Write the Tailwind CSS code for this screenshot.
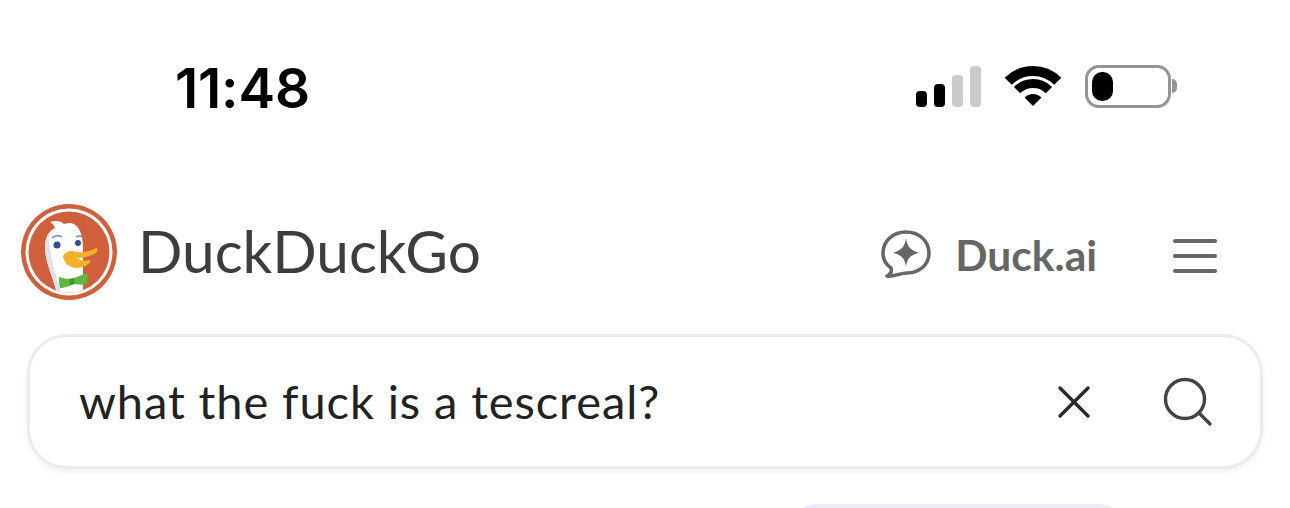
<!DOCTYPE html>
<html lang="en">
<head>
  <meta charset="UTF-8" />
  <title>DuckDuckGo</title>
  <script src="https://cdn.jsdelivr.net/npm/@tailwindcss/browser@4"></script>
</head>
<body class="bg-white h-[508px] overflow-hidden font-['Lato','Noto_Sans',sans-serif]">

  <!-- status bar -->
  <div class="h-[176px] flex items-center justify-between pl-[175px] pr-[113px]">
    <span class="font-['Inter'] text-[55px] font-semibold text-black tracking-[-0.2px] leading-none">11:48</span>
    <div class="flex items-center gap-[23px] mt-[-4px]">
      <div class="flex items-end gap-[7px] h-[41px] mt-[1px]">
        <div class="w-[11px] h-[16px] rounded-[4px] bg-black"></div>
        <div class="w-[11px] h-[23px] rounded-[4px] bg-black"></div>
        <div class="w-[11px] h-[32px] rounded-[4px] bg-[#cbcbcb]"></div>
        <div class="w-[11px] h-[41px] rounded-[4px] bg-[#cbcbcb]"></div>
      </div>
      <svg width="58" height="42" viewBox="0 0 58 42">
        <path d="M4.250 16.250 A35 35 0 0 1 53.750 16.250" fill="none" stroke="#000" stroke-width="10" />
        <path d="M13.100 25.100 A22.500 22.500 0 0 1 44.900 25.100" fill="none" stroke="#000" stroke-width="9" />
        <path d="M29 41 L20.500 32.500 A12 12 0 0 1 37.500 32.500 Z" fill="#000" />
      </svg>
      <div class="flex items-center gap-[1px]">
        <div class="w-[86px] h-[43px] rounded-[14px] border-[3px] border-[#949494] p-[4px]">
          <div class="w-[21px] h-full rounded-[10px] bg-black"></div>
        </div>
        <div class="w-[5px] h-[14px] rounded-r-full bg-[#949494]"></div>
      </div>
    </div>
  </div>

  <!-- header -->
  <div class="h-[152px] flex items-center pl-[21px] pr-[73px]">
    <svg width="96" height="96" viewBox="0 0 96 96" class="shrink-0">
      <circle cx="48" cy="48" r="48" fill="#d0603c" />
      <circle cx="48" cy="48" r="43.500" fill="#fff" />
      <circle cx="48" cy="48" r="40.500" fill="#d0603c" />
      <clipPath id="logoClip"><circle cx="48" cy="48" r="40.500" /></clipPath>
      <g clip-path="url(#logoClip)">
        <path d="M37 92 L31 73 C27 62 24 52 24 43 C24 33 28 27 34 24 C33 21 31 19 29 18 C35 16 40 17 43 20 C46 19 48 19 50 19 C58 21 62 30 62 46 L62 96 L40 96 Z" fill="#fff" />
        <path d="M37 92 L31 73 C27 62 24 52 24 43 C24 37 26 32 28 29 C27 46 33 68 43 96 Z" fill="#dfe1ea" />
      </g>
      <path d="M42 52 C45 47 50 46 55 48 C62 49 70 47 75 44 C77 44 77 47 75 49 C70 52 63 54 56 54 C60 57 65 57 70 56 C69 60 63 64 56 64 C48 64 43 59 42 52 Z" fill="#f2b02b" />
      <circle cx="36" cy="41" r="3.500" fill="#2d4f8e" />
      <circle cx="57" cy="39" r="3" fill="#2d4f8e" />
      <path d="M31 34 Q36 30 41 33" fill="none" stroke="#6b86c4" stroke-width="1.300" />
      <path d="M55 33 Q58 31 62 33" fill="none" stroke="#6b86c4" stroke-width="1.300" />
      <path d="M38 73 C42 74 46 75 49 75 C54 74 60 71 66 69 C67 73 67 77 65 81 C60 81 56 80 53 80 C49 82 43 84 39 84 C38 80 38 77 38 73 Z" fill="#5fb541" />
      <path d="M48 75 L53 74 L54 80 L49 81 Z" fill="#3f9a2c" />
    </svg>
    <span class="ml-[21px] mt-[-3px] text-[58.5px] text-[#3d3d3d] leading-none">DuckDuckGo</span>
    <div class="ml-auto flex items-center mt-[6px]">
      <svg width="50" height="50" viewBox="0 0 50 50" fill="none" class="mt-[-3px]">
        <path d="M6 47 C10 45 11 42 10 39 C4 35 2 29 2 24 C2 12 12 3 25 3 C38 3 48 12 48 24 C48 36 38 44 26 44 C20 44 12 48 6 47 Z" stroke="#666" stroke-width="3.600" stroke-linejoin="round" />
        <path d="M25 9 C26 17 29 21 38 24 C29 26 26 30 25 38 C24 30 21 26 12 24 C21 21 24 17 25 9 Z" fill="#666" />
      </svg>
      <span class="ml-[24px] text-[42.5px] font-bold text-[#666666] leading-none">Duck.ai</span>
      <div class="ml-[76px] w-[44px] flex flex-col gap-[11px] mt-[1px]">
        <div class="h-[4px] rounded-full bg-[#666666]"></div>
        <div class="h-[4px] rounded-full bg-[#666666]"></div>
        <div class="h-[4px] rounded-full bg-[#666666]"></div>
      </div>
    </div>
  </div>

  <!-- search box -->
  <div class="mt-[6px] ml-[27px] w-[1236px] h-[135px] rounded-[40px] border-[3px] border-[#ececec] bg-white shadow-[0_3px_6px_rgba(0,0,0,0.06)] flex items-center pl-[49px] pr-[47px]">
    <span class="text-[47px] text-[#222222] leading-none tracking-[0.9px]">what the fuck is a tescreal?</span>
    <svg width="34" height="34" viewBox="0 0 34 34" fill="none" class="ml-auto">
      <path d="M3 3 L31 31 M31 3 L3 31" stroke="#2a2a2a" stroke-width="3.400" stroke-linecap="round" />
    </svg>
    <svg width="50" height="50" viewBox="0 0 50 50" fill="none" class="ml-[72px]">
      <circle cx="22" cy="22" r="19.500" stroke="#444" stroke-width="3.400" />
      <path d="M36 36 L47 47" stroke="#444" stroke-width="3.400" stroke-linecap="round" />
    </svg>
  </div>

  <!-- next result chip, cut off by the window -->
  <div class="mt-[35px] ml-[795px] w-[325px] h-[4px] overflow-hidden">
    <div class="h-[40px] rounded-t-[20px] bg-[#eceefc]"></div>
  </div>

</body>
</html>
